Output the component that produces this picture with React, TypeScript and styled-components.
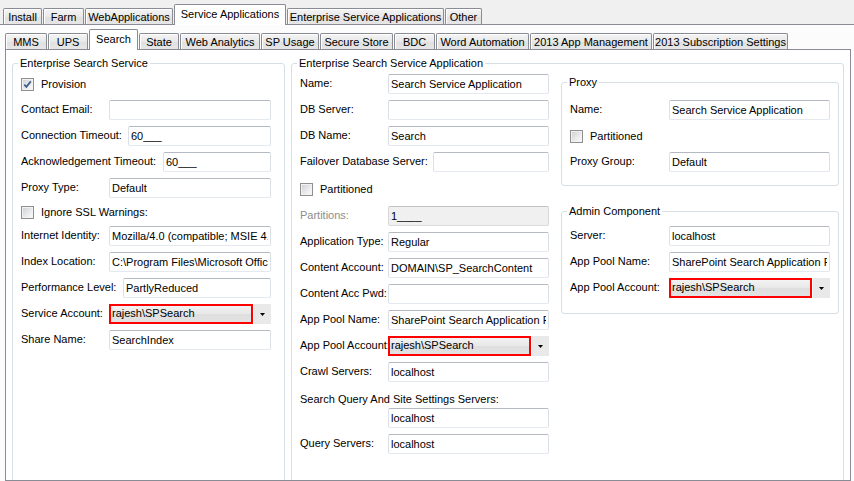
import React from 'react'
import styled, { createGlobalStyle } from 'styled-components'

const GlobalStyle = createGlobalStyle`
  html, body {
    margin: 0;
    padding: 0;
  }
  body {
    width: 854px;
    height: 481px;
    overflow: hidden;
    background: #f0f0f0;
    font-family: "Liberation Sans", Arial, sans-serif;
    font-size: 11px;
    color: #000;
  }
`

const Window = styled.div`
  display: flex;
  flex-direction: column;
  width: 854px;
  height: 481px;
`

const TabStrip = styled.div<{ $pad: number }>`
  display: flex;
  align-items: flex-end;
  gap: 1px;
  box-sizing: border-box;
  height: 25px;
  padding-left: ${p => p.$pad}px;
  border-bottom: 1px solid #898c95;
  flex: none;
`

const Tab = styled.div<{ $w: number; $active?: boolean }>`
  position: relative;
  box-sizing: border-box;
  flex: none;
  width: ${p => p.$w}px;
  height: ${p => (p.$active ? 21 : 16)}px;
  margin-bottom: ${p => (p.$active ? -1 : 0)}px;
  padding-top: ${p => (p.$active ? 2 : 1)}px;
  border: 1px solid #898c95;
  border-bottom: none;
  border-radius: 2px 2px 0 0;
  background: ${p => (p.$active ? '#ffffff' : 'linear-gradient(#f4f4f4, #e9e9e9 50%, #e0e0e0 51%, #e6e6e6)')};
  box-shadow: inset 1px 1px 0 #ffffff;
  line-height: 14px;
  text-align: center;
  white-space: nowrap;
  z-index: ${p => (p.$active ? 1 : 0)};
`

const OuterPage = styled.div`
  flex: 1;
  display: flex;
  flex-direction: column;
  padding: 0 3px 0 5px;
  background: #fcfcfc;
  min-height: 0;
`

const InnerPage = styled.div`
  flex: 1;
  display: flex;
  align-items: flex-start;
  gap: 6px;
  padding: 6px 6px 0;
  background: #ffffff;
  border: 1px solid #898c95;
  border-top: none;
  overflow: hidden;
`

const Group = styled.fieldset<{ $w: number; $pad: string; $h?: number }>`
  flex: none;
  box-sizing: border-box;
  width: ${p => p.$w}px;
  ${p => (p.$h ? `height: ${p.$h}px;` : '')}
  margin: 0;
  padding: ${p => p.$pad};
  border: 1px solid #d5dfe5;
  border-radius: 3px;
  min-width: 0;
`

const Legend = styled.legend`
  margin-left: -3px;
  padding: 0 2px;
  line-height: 14px;
  font-size: 11px;
`

const Split = styled.div`
  display: flex;
  align-items: flex-start;
  gap: 12px;
`

const Form = styled.div<{ $w?: number }>`
  display: flex;
  flex-direction: column;
  gap: 6px;
  ${p => (p.$w ? `width: ${p.$w}px; flex: none;` : '')}
`

const SideColumn = styled.div`
  flex: none;
  width: 278px;
  display: flex;
  flex-direction: column;
  gap: 18px;
  margin-top: 1px;
`

const Row = styled.div`
  display: flex;
  align-items: center;
  height: 20px;
`

const Label = styled.span<{ $lw: number; $muted?: boolean }>`
  flex: none;
  width: ${p => p.$lw}px;
  white-space: nowrap;
  color: ${p => (p.$muted ? '#8d8d8d' : '#000')};
  margin-top: -2px;
`

const LoneLabel = styled.div`
  height: 14px;
  line-height: 14px;
  margin: 4px 0 -4px;
  white-space: nowrap;
`

const TextBox = styled.input`
  flex: 1;
  min-width: 0;
  box-sizing: border-box;
  height: 20px;
  margin: 0;
  padding: 0 2px;
  border: 1px solid;
  border-color: #b5b9c1 #dbdfe6 #e3e9ef #dbdfe6;
  border-radius: 2px;
  background: #ffffff;
  font-family: inherit;
  font-size: 11px;
  color: #000;
  outline: none;

  &:disabled {
    background: #f0f0f0;
    border-color: #c2c2c2 #d7d7d7 #dcdcdc #d7d7d7;
    color: #000;
  }
`

const CheckRow = styled.label<{ $h: number }>`
  display: flex;
  align-items: center;
  gap: 7px;
  height: ${p => p.$h}px;
  white-space: nowrap;
`

const CheckBox = styled.span`
  flex: none;
  display: flex;
  align-items: center;
  justify-content: center;
  box-sizing: border-box;
  width: 13px;
  height: 13px;
  border: 1px solid #8f8f8f;
  background: linear-gradient(135deg, #cdcfd3, #f5f5f5 80%);
  box-shadow: inset 0 0 0 1px #f2f2f2;
`

const Combo = styled.div`
  flex: 1;
  min-width: 0;
  display: flex;
  height: 20px;
`

const ComboField = styled.div`
  flex: 1;
  min-width: 0;
  box-sizing: border-box;
  border: 2px solid #ff0000;
  padding-left: 1px;
  line-height: 15px;
  background: linear-gradient(#f3f3f3, #e7e7e7 50%, #dedede 51%, #e2e2e2);
  white-space: nowrap;
  overflow: hidden;
`

const ComboArrow = styled.div`
  flex: none;
  width: 17px;
  margin-left: 1px;
  display: flex;
  align-items: center;
  justify-content: center;
  background: #e9e9e9;
`

type TabDef = [string, number, boolean?]

const outerTabs: TabDef[] = [
  ['Install', 39],
  ['Farm', 41],
  ['WebApplications', 88],
  ['Service Applications', 112, true],
  ['Enterprise Service Applications', 157],
  ['Other', 37],
]

const innerTabs: TabDef[] = [
  ['MMS', 42],
  ['UPS', 40],
  ['Search', 49, true],
  ['State', 40],
  ['Web Analytics', 80],
  ['SP Usage', 58],
  ['Secure Store', 73],
  ['BDC', 41],
  ['Word Automation', 93],
  ['2013 App Management', 122],
  ['2013 Subscription Settings', 135],
]

const Check: React.FC<{ checked?: boolean; label: string; h: number }> = ({ checked, label, h }) => (
  <CheckRow $h={h}>
    <CheckBox>
      {checked && (
        <svg width="9" height="9" viewBox="0 0 9 9">
          <path d="M1.3 4.6 L3.4 6.9 L7.8 1.4" fill="none" stroke="#3f5b93" strokeWidth="1.7" />
        </svg>
      )}
    </CheckBox>
    <span>{label}</span>
  </CheckRow>
)

const Field: React.FC<{ label: string; value?: string; lw: number; disabled?: boolean }> = ({
  label,
  value = '',
  lw,
  disabled,
}) => (
  <Row>
    <Label $lw={lw} $muted={disabled}>
      {label}
    </Label>
    <TextBox readOnly disabled={disabled} defaultValue={value} />
  </Row>
)

const Account: React.FC<{ label: string; lw: number }> = ({ label, lw }) => (
  <Row>
    <Label $lw={lw}>{label}</Label>
    <Combo>
      <ComboField>rajesh\SPSearch</ComboField>
      <ComboArrow>
        <svg width="5" height="3" viewBox="0 0 5 3">
          <polygon points="0,0 5,0 2.5,3" fill="#000" />
        </svg>
      </ComboArrow>
    </Combo>
  </Row>
)

const App: React.FC = () => (
  <Window>
    <GlobalStyle />
    <TabStrip $pad={3}>
      {outerTabs.map(([t, w, a]) => (
        <Tab key={t} $w={w} $active={a}>
          {t}
        </Tab>
      ))}
    </TabStrip>
    <OuterPage>
      <TabStrip $pad={0}>
        {innerTabs.map(([t, w, a]) => (
          <Tab key={t} $w={w} $active={a}>
            {t}
          </Tab>
        ))}
      </TabStrip>
      <InnerPage>
        <Group $w={273} $h={480} $pad="4px 13px 0 8px">
          <Legend>Enterprise Search Service</Legend>
          <Form>
            <Check checked label="Provision" h={20} />
            <Field label="Contact Email:" lw={88} />
            <Field label="Connection Timeout:" lw={107} value="60___" />
            <Field label="Acknowledgement Timeout:" lw={142} value="60___" />
            <Field label="Proxy Type:" lw={88} value="Default" />
            <Check label="Ignore SSL Warnings:" h={16} />
            <Field label="Internet Identity:" lw={88} value="Mozilla/4.0 (compatible; MSIE 4.01; Windows NT; MS Search 6.0 Robot)" />
            <Field label="Index Location:" lw={88} value="C:\Program Files\Microsoft Office Servers\15.0\Data\Office Server\Applications" />
            <Field label="Performance Level:" lw={102} value="PartlyReduced" />
            <Account label="Service Account:" lw={88} />
            <Field label="Share Name:" lw={88} value="SearchIndex" />
          </Form>
        </Group>
        <Group $w={553} $h={480} $pad="4px 4px 0 8px">
          <Legend>Enterprise Search Service Application</Legend>
          <Split>
            <Form $w={249}>
              <Field label="Name:" lw={88} value="Search Service Application" />
              <Field label="DB Server:" lw={88} />
              <Field label="DB Name:" lw={88} value="Search" />
              <Field label="Failover Database Server:" lw={133} />
              <Check label="Partitioned" h={22} />
              <Field label="Partitions:" lw={88} value="1____" disabled />
              <Field label="Application Type:" lw={88} value="Regular" />
              <Field label="Content Account:" lw={88} value="DOMAIN\SP_SearchContent" />
              <Field label="Content Acc Pwd:" lw={88} />
              <Field label="App Pool Name:" lw={88} value="SharePoint Search Application Pool" />
              <Account label="App Pool Account:" lw={88} />
              <Field label="Crawl Servers:" lw={88} value="localhost" />
              <LoneLabel>Search Query And Site Settings Servers:</LoneLabel>
              <Field label="" lw={88} value="localhost" />
              <Field label="Query Servers:" lw={88} value="localhost" />
            </Form>
            <SideColumn>
              <Group $w={278} $pad="11px 8px 13px 8px">
                <Legend>Proxy</Legend>
                <Form>
                  <Field label="Name:" lw={99} value="Search Service Application" />
                  <Check label="Partitioned" h={20} />
                  <Field label="Proxy Group:" lw={99} value="Default" />
                </Form>
              </Group>
              <Group $w={278} $pad="8px 8px 15px 8px">
                <Legend>Admin Component</Legend>
                <Form>
                  <Field label="Server:" lw={99} value="localhost" />
                  <Field label="App Pool Name:" lw={99} value="SharePoint Search Application Pool" />
                  <Account label="App Pool Account:" lw={99} />
                </Form>
              </Group>
            </SideColumn>
          </Split>
        </Group>
      </InnerPage>
    </OuterPage>
  </Window>
)

export default App
